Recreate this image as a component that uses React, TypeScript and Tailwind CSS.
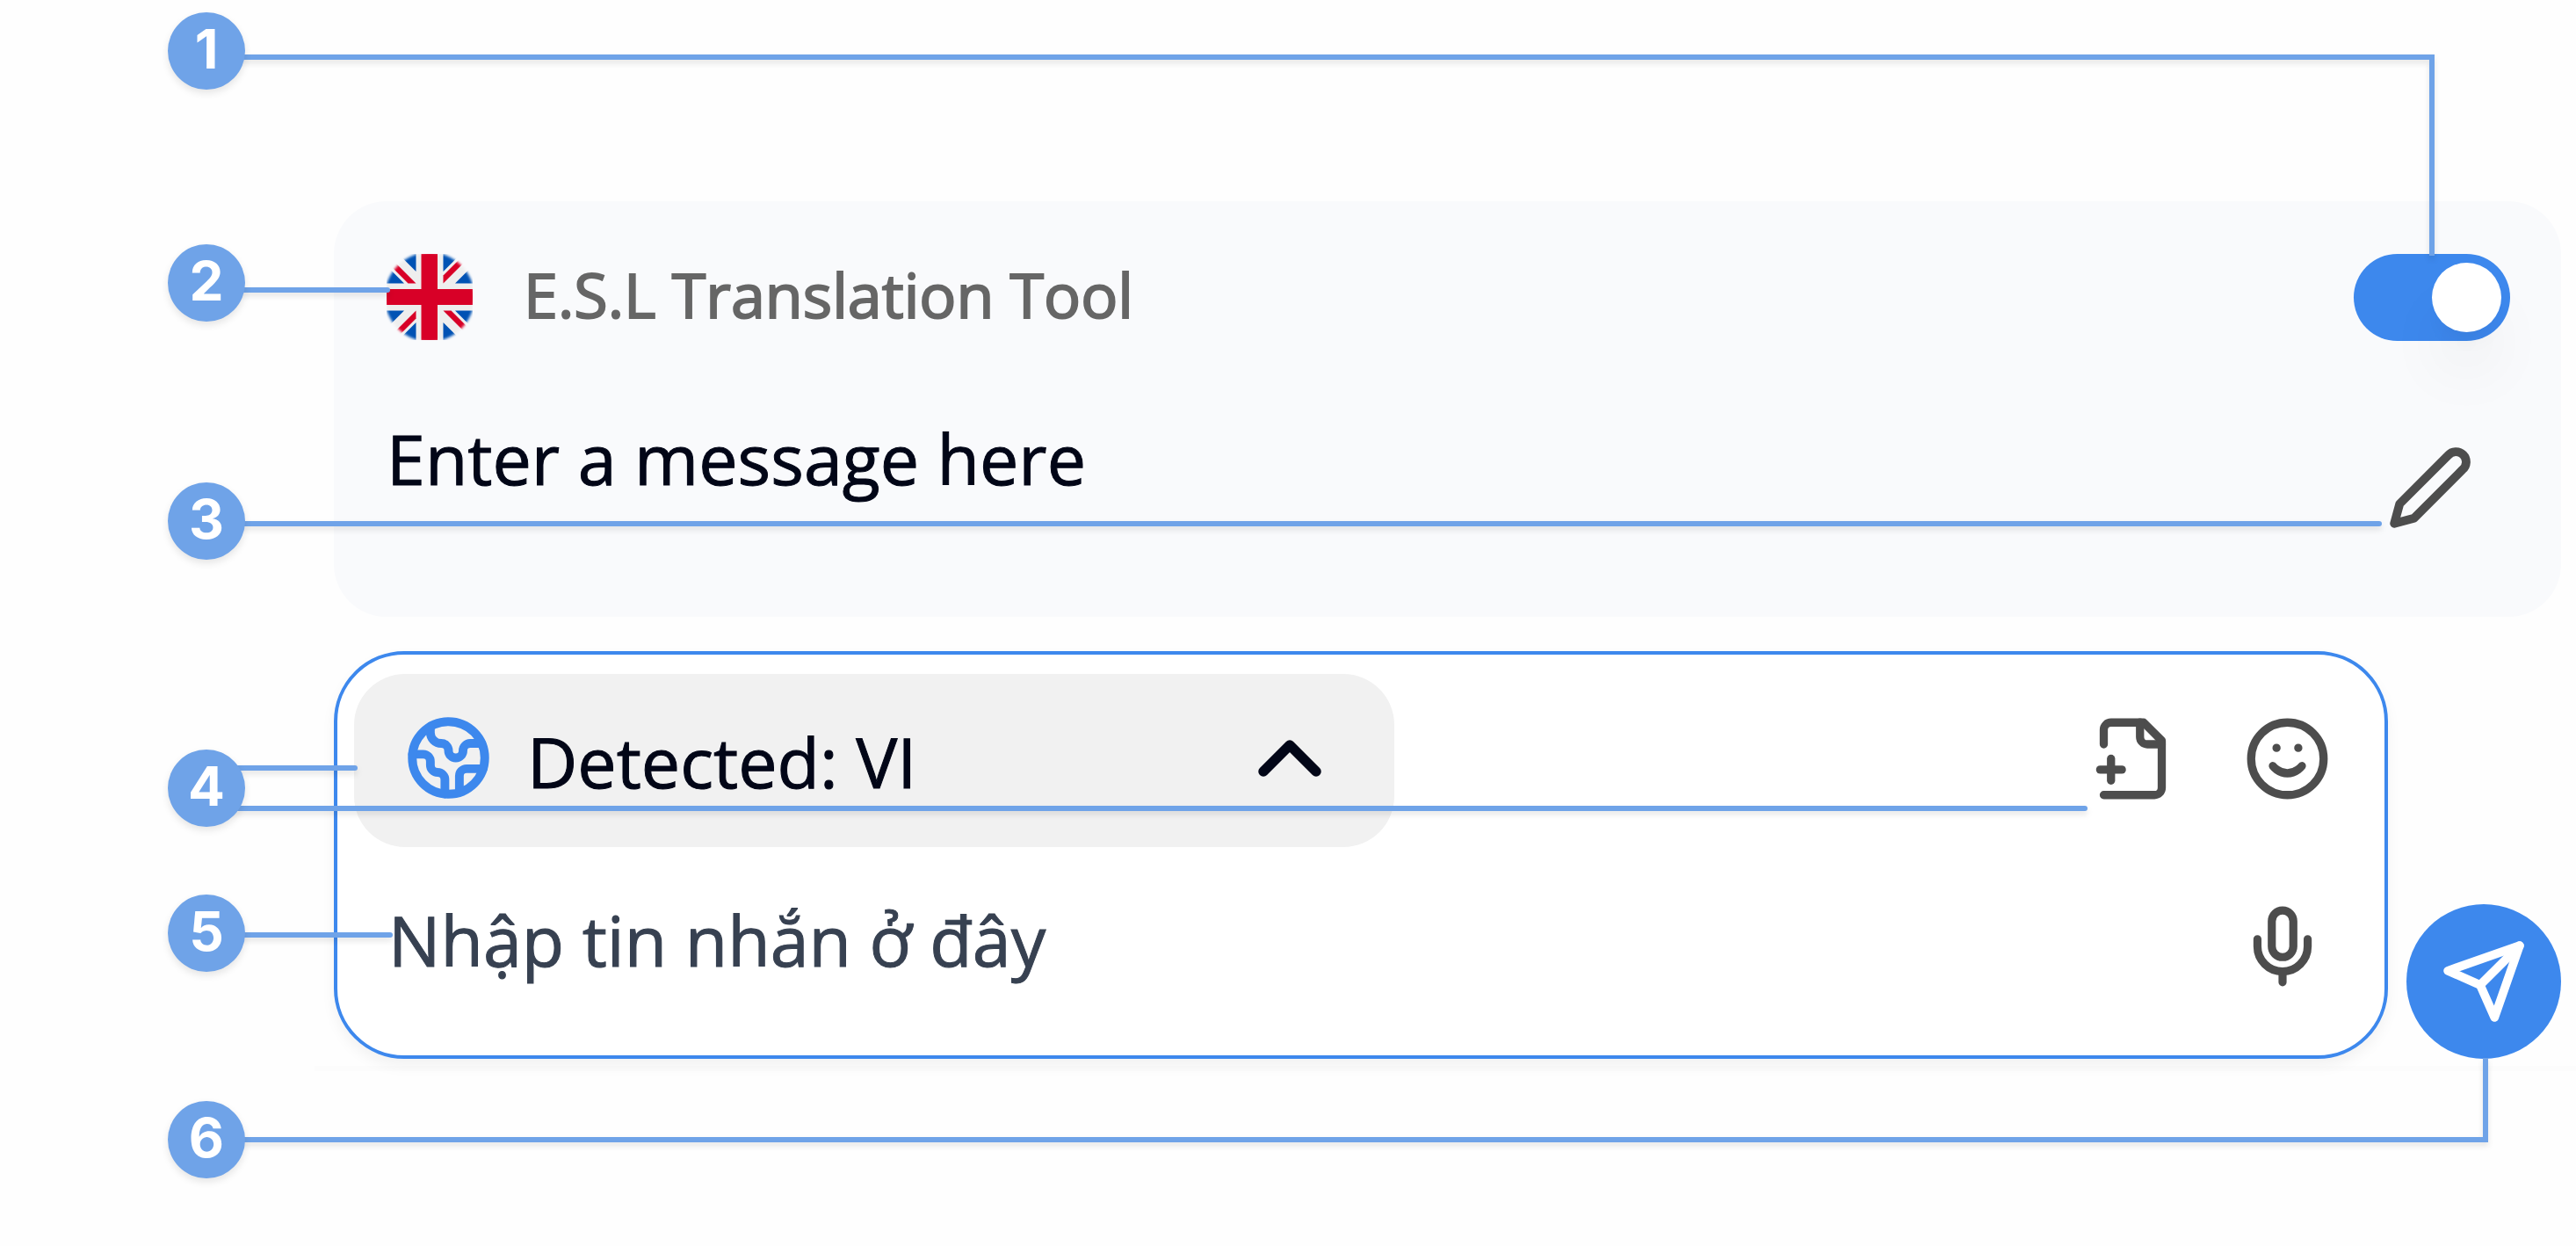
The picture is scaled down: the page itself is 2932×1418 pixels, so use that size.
import { useState } from "react";
import type { ReactNode } from "react";

function Icon({ children, className, strokeWidth = 2.25, viewBox = "0 0 24 24" }: {
  children: ReactNode;
  className: string;
  strokeWidth?: number;
  viewBox?: string;
}) {
  return (
    <svg
      viewBox={viewBox}
      className={className}
      fill="none"
      stroke="currentColor"
      strokeWidth={strokeWidth}
      strokeLinecap="round"
      strokeLinejoin="round"
      aria-hidden="true"
    >
      {children}
    </svg>
  );
}

function Flag() {
  return (
    <svg viewBox="0 0 98 98" className="size-[98px] shrink-0" role="img" aria-label="English">
      <defs>
        <filter id="soft" x="-10%" y="-10%" width="120%" height="120%">
          <feGaussianBlur stdDeviation="1.6" />
        </filter>
        <mask id="round">
          <circle cx="49" cy="49" r="51" fill="#fff" filter="url(#soft)" />
        </mask>
      </defs>
      <g mask="url(#round)">
        <rect width="98" height="98" fill="#eeeeee" />
        <g fill="#0052b4">
          <path d="M33.500 20V-10H3.500Z" />
          <path d="M-10 33.500H20L-10 3.500Z" />
          <path d="M64.500 -10V20L94.500 -10Z" />
          <path d="M108 33.500H78L108 3.500Z" />
          <path d="M-10 64.500H20L-10 94.500Z" />
          <path d="M33.500 108V78L3.500 108Z" />
          <path d="M64.500 108V78L94.500 108Z" />
          <path d="M108 64.500H78L108 94.500Z" />
        </g>
        <g fill="#d80027">
          <path d="M33.500 33.500L5 5L0 9L24.500 33.500Z" />
          <path d="M64.500 33.500L93 5L84 5L64.500 24.500Z" />
          <path d="M33.500 64.500L5 93L14 93L33.500 73.500Z" />
          <path d="M64.500 64.500L93 93L98 89L73.500 64.500Z" />
          <path d="M39.500 0H58V98H39.500Z" />
          <path d="M0 40H98V58H0Z" />
        </g>
      </g>
    </svg>
  );
}

const badges = [
  { n: 1, gap: "mt-0" },
  { n: 2, gap: "mt-44" },
  { n: 3, gap: "mt-[183px]" },
  { n: 4, gap: "mt-[216px]" },
  { n: 5, gap: "mt-[77px]" },
  { n: 6, gap: "mt-[147px]" },
];

const leaders = [
  "top-[62px] right-[161px] h-[229px] border-t-6 border-r-6",
  "top-[327px] w-[209px] border-t-6 rounded-r-full",
  "top-[593px] right-[221px] border-t-6 rounded-r-full",
  "top-[871px] w-[172px] border-t-6 rounded-r-full",
  "top-[917px] right-[556px] border-t-6 rounded-r-full",
  "top-[1061px] w-[212px] border-t-6 rounded-r-full",
  "top-[1204px] right-[100px] h-24 border-b-6 border-r-6",
];

export default function App() {
  const [on, setOn] = useState(true);
  return (
    <div className="relative flex min-h-screen w-full overflow-hidden bg-[#fefefe] font-['Open_Sans','Noto_Sans',sans-serif]">
      <ol className="relative z-20 w-[380px] shrink-0 pt-3.5 pl-[191px]">
        {badges.map((b) => (
          <li
            key={b.n}
            className={`${b.gap} flex size-[88px] items-center justify-center rounded-full bg-[#6fa3e8] pb-1 font-['Inter',sans-serif] text-[62px] leading-none font-bold text-white shadow-[0_4px_8px_rgba(0,0,0,0.1)]`}
          >
            {b.n}
          </li>
        ))}
      </ol>

      <div className="pointer-events-none absolute inset-0 z-10" aria-hidden="true">
        {leaders.map((c) => (
          <span key={c} className={`${c} absolute left-[235px] border-[#6fa3e8] drop-shadow-[0_4px_3px_rgba(0,0,0,0.1)]`} />
        ))}
      </div>

      <main className="min-w-0 flex-1 pt-[229px] pr-[17px]">
        <section className="rounded-[60px] bg-[#f9fafc] pt-[60px] pr-[58px] pb-[98px] pl-[60px]">
          <header className="flex items-start">
            <Flag />
            <h1 className="ml-[58px] flex-1 text-[70px] leading-[92px] font-medium text-[#666666] [-webkit-text-stroke:2px_#666666]">
              E.S.L Translation Tool
            </h1>
            <button
              type="button"
              role="switch"
              aria-checked={on}
              aria-label="Translation"
              onClick={() => setOn(!on)}
              className={`${on ? "justify-end" : "justify-start"} flex h-[99px] w-[178px] items-center rounded-full bg-[#3d88ed] px-2.5`}
            >
              <span className="size-[79px] rounded-full bg-white shadow-[0_50px_75px_-15px_rgba(0,0,0,0.1),0_20px_30px_-20px_rgba(0,0,0,0.1)]" />
            </button>
          </header>
          <div className="mt-[74px] flex items-start justify-between">
            <p className="text-[79px] leading-[120px] text-[#020617] [-webkit-text-stroke:1px_#020617]">Enter a message here</p>
            <button type="button" aria-label="Edit translation" className="mt-11 mr-[42px] text-[#4d4d4d]">
              <Icon className="size-[98px]" strokeWidth={2.4}>
                <path d="M17 3a2.850 2.830 0 1 1 4 4L7.500 20.500 2 22l1.500-5.500Z" />
              </Icon>
            </button>
          </div>
        </section>

        <div className="mt-[39px] flex items-end gap-[21px]">
          <form className="min-w-0 flex-1 rounded-[80px] border-4 border-[#3d88ed] bg-white pt-[22px] pb-[71px] pl-[19px] shadow-[0_8px_16px_rgba(0,0,0,0.05)]">
            <div className="flex items-start">
              <button
                type="button"
                aria-expanded="true"
                className="flex h-[197px] w-[1184px] items-start rounded-[58px] bg-[#f1f1f1] pt-[46px] pr-[59px] pl-[58px] text-[79px] leading-[108px] text-[#020617] [-webkit-text-stroke:1px_#020617]"
              >
                <Icon className="size-[99px] shrink-0 text-[#3d88ed]" strokeWidth={2.4}>
                  <path d="M21.540 15H17a2 2 0 0 0-2 2v4.540" />
                  <path d="M7 3.340V5a3 3 0 0 0 3 3a2 2 0 0 1 2 2c0 1.100.9 2 2 2a2 2 0 0 0 2-2c0-1.100.9-2 2-2h3.170" />
                  <path d="M11 21.950V18a2 2 0 0 0-2-2a2 2 0 0 1-2-2v-1a2 2 0 0 0-2-2H2.050" />
                  <circle cx="12" cy="12" r="10" />
                </Icon>
                <span className="ml-10">Detected: VI</span>
                <Icon className="ml-auto h-[100px] w-[120px] shrink-0" strokeWidth={2.3} viewBox="0 2 24 20">
                  <path d="m18 15-6-6-6 6" />
                </Icon>
              </button>
              <div className="mt-[47px] mr-[61px] ml-auto flex gap-[77px] text-[#4d4d4d]">
                <button type="button" aria-label="Attach file">
                  <Icon className="size-[99px]">
                    <path d="M4 22h14a2 2 0 0 0 2-2V7l-5-5H6a2 2 0 0 0-2 2v4" />
                    <path d="M14 2v4a2 2 0 0 0 2 2h4" />
                    <path d="M3 15h6" />
                    <path d="M6 12v6" />
                  </Icon>
                </button>
                <button type="button" aria-label="Insert emoji">
                  <Icon className="size-[99px]">
                    <circle cx="12" cy="12" r="10" />
                    <path d="M8 14s1.500 2 4 2 4-2 4-2" />
                    <path d="M9 9h.01M15 9h.01" />
                  </Icon>
                </button>
              </div>
            </div>
            <div className="mt-[46px] flex items-start pl-[39px]">
              <input
                type="text"
                aria-label="Tin nhắn"
                placeholder="Nhập tin nhắn ở đây"
                className="h-[120px] min-w-0 flex-1 bg-transparent text-[79px] leading-[120px] text-[#374151] outline-none [-webkit-text-stroke:1px_#374151] placeholder:text-[#374151]"
              />
              <button type="button" aria-label="Record voice" className="mt-[18px] mr-[67px] text-[#4d4d4d]">
                <Icon className="size-[98px]">
                  <path d="M12 2a3 3 0 0 0-3 3v7a3 3 0 0 0 6 0V5a3 3 0 0 0-3-3Z" />
                  <path d="M19 10v2a7 7 0 0 1-14 0v-2" />
                  <path d="M12 19v3" />
                </Icon>
              </button>
            </div>
          </form>
          <button type="button" aria-label="Send" className="flex size-44 shrink-0 items-center justify-center rounded-full bg-[#3d88ed] text-white">
            <Icon className="size-[98px]" strokeWidth={2.4}>
              <path d="m22 2-7 20-4-9-9-4Z" />
              <path d="M22 2 11 13" />
            </Icon>
          </button>
        </div>
        <div className="mt-2 -mr-[17px] -ml-[22px] h-1.5 bg-[#fcfcfc]" />
      </main>
    </div>
  );
}
